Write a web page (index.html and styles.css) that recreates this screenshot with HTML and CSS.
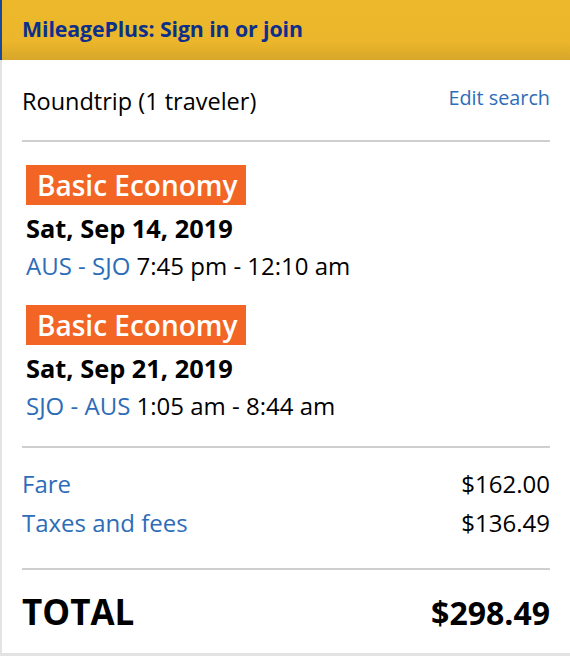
FILE: index.html
```html
<!DOCTYPE html>
<html>
<head>
<meta charset="utf-8">
<link rel="stylesheet" href="styles.css">
</head>
<body>
<div class="card">
  <div class="header"><a class="signin">MileagePlus: Sign in or join</a></div>
  <div class="body">
    <div class="trip-row">
      <span class="trip">Roundtrip (1 traveler)</span>
      <a class="edit">Edit search</a>
    </div>
    <div class="flights">
      <div class="flight">
        <span class="badge">Basic Economy</span>
        <div class="date">Sat, Sep 14, 2019</div>
        <div class="route"><span class="link">AUS - SJO</span> 7:45 pm - 12:10 am</div>
      </div>
      <div class="flight">
        <span class="badge">Basic Economy</span>
        <div class="date">Sat, Sep 21, 2019</div>
        <div class="route"><span class="link">SJO - AUS</span> 1:05 am - 8:44 am</div>
      </div>
    </div>
    <div class="prices">
      <div class="price-row"><span class="link">Fare</span><span>$162.00</span></div>
      <div class="price-row"><span class="link">Taxes and fees</span><span>$136.49</span></div>
    </div>
    <div class="total-row"><span class="total-label">TOTAL</span><span class="total-amount">$298.49</span></div>
  </div>
</div>
</body>
</html>
```
FILE: styles.css
```css
html, body {
  margin: 0;
  padding: 0;
  background: #fff;
}
body {
  font-family: "Open Sans", "Noto Sans", sans-serif;
  color: #000;
}
.card {
  width: 570px;
  height: 656px;
  box-sizing: border-box;
  border-left: 2px solid #e3e3e3;
  border-bottom: 3px solid #e3e3e3;
  display: flex;
  flex-direction: column;
}
.header {
  height: 60px;
  margin-left: -2px;
  border-left: 2px solid #1a4a9c;
  background: linear-gradient(#edb92b 0%, #ebb62b 70%, #d7a62a 100%);
  display: flex;
  align-items: center;
  padding-left: 20px;
  padding-bottom: 3px;
  box-sizing: border-box;
}
.signin {
  font-size: 21.3px;
  font-weight: 700;
  color: #0c2f8c;
  letter-spacing: -0.1px;
}
.body {
  padding: 0 20px 0 20px;
  display: flex;
  flex-direction: column;
}
.trip-row {
  display: flex;
  justify-content: space-between;
  align-items: center;
  height: 80px;
  border-bottom: 2px solid #cfcfcf;
}
.trip {
  font-size: 23.5px;
  margin-top: 2px;
}
.edit {
  font-size: 19.8px;
  color: #2d6db8;
  margin-top: -6px;
}
.flights {
  padding: 23px 0 25px 4px;
  border-bottom: 2px solid #cfcfcf;
  display: flex;
  flex-direction: column;
  gap: 24px;
}
.flight {
  display: flex;
  flex-direction: column;
  align-items: flex-start;
}
.badge {
  background: #f26524;
  color: #fff;
  font-size: 28px;
  font-weight: 600;
  height: 40px;
  line-height: 40px;
  padding: 0 8px 0 11px;
  box-sizing: border-box;
}
.date {
  font-size: 25.4px;
  font-weight: 700;
  line-height: 32px;
  margin-top: 7px;
}
.route {
  font-size: 24px;
  line-height: 30px;
  margin-top: 7px;
}
.link {
  color: #2d6db8;
}
.prices {
  padding: 20px 0 29px 0;
  border-bottom: 2px solid #cfcfcf;
  display: flex;
  flex-direction: column;
  gap: 7px;
}
.price-row {
  display: flex;
  justify-content: space-between;
  font-size: 24px;
  line-height: 32px;
}
.total-row {
  display: flex;
  justify-content: space-between;
  align-items: baseline;
  font-weight: 700;
  padding-top: 18px;
  line-height: 48px;
}
.total-label {
  font-size: 35px;
}
.total-amount {
  font-size: 32px;
}
```
